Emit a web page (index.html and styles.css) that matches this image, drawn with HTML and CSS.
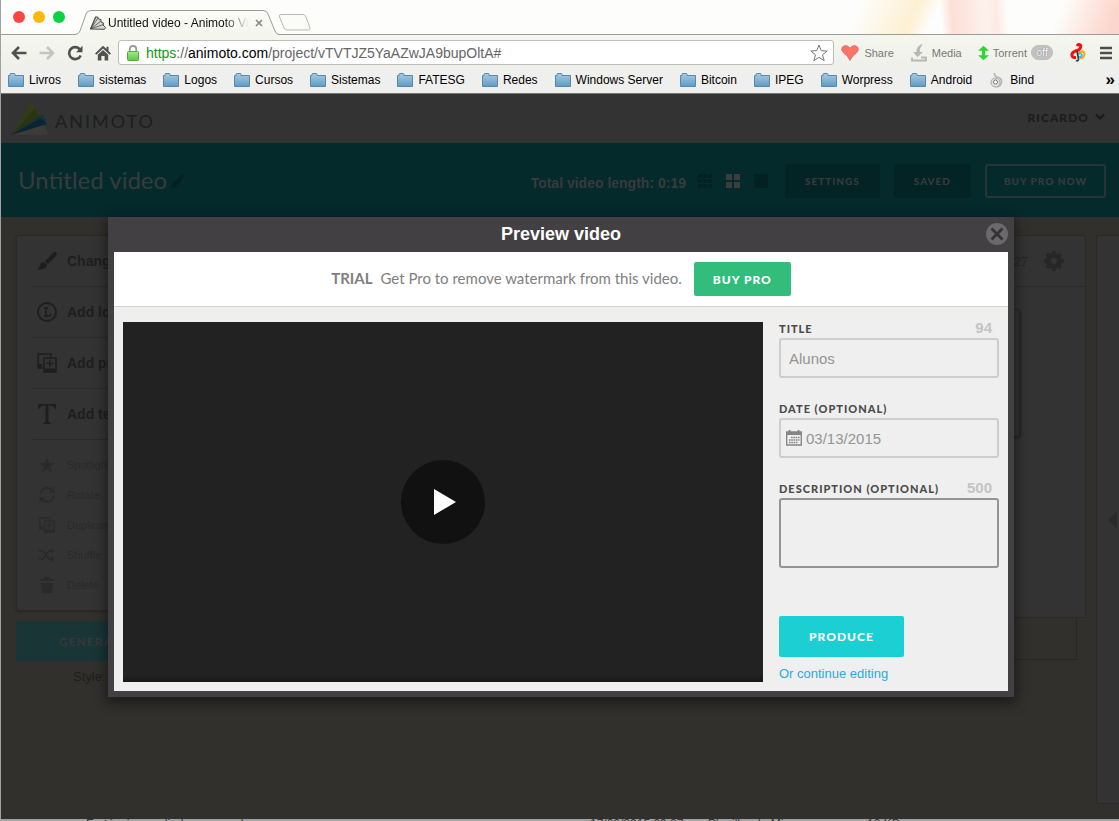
FILE: index.html
```html
<!DOCTYPE html>
<html lang="en">
<head>
<meta charset="utf-8">
<title>Untitled video - Animoto Video Maker</title>
<link rel="stylesheet" href="styles.css">
</head>
<body>
<svg class="defs" aria-hidden="true">
  <defs>
    <linearGradient id="folderFill" x1="0" y1="0" x2="0" y2="1"><stop offset="0" stop-color="#a9cbe2"/><stop offset="1" stop-color="#5f9bc4"/></linearGradient>
    <linearGradient id="lockFill" x1="0" y1="0" x2="0" y2="1"><stop offset="0" stop-color="#a5e88a"/><stop offset="1" stop-color="#5fc64c"/></linearGradient>
    <linearGradient id="tabFill" x1="0" y1="0" x2="0" y2="1"><stop offset="0" stop-color="#fdfdf8"/><stop offset="1" stop-color="#f4f5ec"/></linearGradient>
    <symbol id="folder" viewBox="0 0 16 14"><path d="M.5 13.500V2.500H2V1.500Q2 .5 3 .5H6Q7 .5 7 1.500V2.500H15.500V13.500Z" fill="url(#folderFill)" stroke="#5b88a6"/></symbol>
    <symbol id="duplicate" viewBox="0 0 20 20"><path d="M6 15H1V1H14V4" fill="none" stroke="currentColor" stroke-width="1.500"/><path d="M1 11H5V15H1Z" fill="currentColor"/><rect x="7" y="5" width="12" height="14" fill="none" stroke="currentColor" stroke-width="1.500"/><path d="M7 15.500H19V19H7Z" fill="currentColor"/><path d="M13 7V14M9.500 10.500H16.500" stroke="currentColor" stroke-width="1.500"/></symbol>
  </defs>
</svg>
<div class="browser">
  <header class="tabstrip">
    <div class="lights"><i class="light red"></i><i class="light amber"></i><i class="light green"></i></div>
    <div class="tab">
      <svg class="tab-shape" viewBox="0 0 204 25" preserveAspectRatio="none"><path d="M0 24.500Q4 24 5 21L11 4Q12 .5 16 .5H188Q192 .5 193 4L200 21Q201 24 204 24.500V25H0Z" fill="url(#tabFill)"/><path d="M0 24.500Q4 24 5 21L11 4Q12 .5 16 .5H188Q192 .5 193 4L200 21Q201 24 204 24.500" fill="none" stroke="#9b9b98"/></svg>
      <svg class="favicon" viewBox="0 0 16 14"><path d="M.5 13L5.500 .8L8 1.200L8.500 3L11 3.500V6L13.500 7L13 9L15.500 11.500L14.500 13.300Z" fill="#d6d6d3" stroke="#4a4a4a"/><path d="M.5 13L8 2M.5 13L11 5M.5 13L13.500 8.500M.5 13L6 1" stroke="#4a4a4a" fill="none" stroke-width=".8"/></svg>
      <span class="tab-title">Untitled video - Animoto Vi</span>
      <button class="tab-close" aria-label="Close tab"><svg viewBox="0 0 8 8"><path d="M1 1L7 7M7 1L1 7" stroke="#888" stroke-width="1.700"/></svg></button>
    </div>
    <button class="new-tab" aria-label="New tab"><svg viewBox="0 0 34 17"><path d="M3 .5H25Q27 .5 28 3L32 14Q32.500 16 30.500 16H9Q7 16 6 14L1.500 3Q.8 .5 3 .5Z" fill="#fbfbf7" stroke="#b9b9b6"/></svg></button>
  </header>

  <nav class="toolbar">
    <div class="nav-buttons">
      <button aria-label="Back"><svg viewBox="0 0 16 16"><path d="M15.500 8H2.500M8 2L2 8L8 14" fill="none" stroke="#505050" stroke-width="2.600"/></svg></button>
      <button aria-label="Forward"><svg viewBox="0 0 16 16"><path d="M.5 8H13.500M8 2L14 8L8 14" fill="none" stroke="#c4c4c0" stroke-width="2.600"/></svg></button>
      <button aria-label="Reload"><svg viewBox="0 0 16 16"><path d="M13 4.500A6 6 0 1 0 13.700 10.500" fill="none" stroke="#505050" stroke-width="2.600"/><path d="M9 7.300H15.500V.8Z" fill="#505050"/></svg></button>
      <button aria-label="Home"><svg viewBox="0 0 16 16"><path d="M8 .8L0 8.500L1.400 9.800L8 3.600L14.600 9.800L16 8.500L13.500 6V1.800H11.500V4Z" fill="#505050"/><path d="M2.800 9.800L8 5L13.200 9.800V15.500H9.600V11H6.400V15.500H2.800Z" fill="#505050"/></svg></button>
    </div>
    <div class="address">
      <svg class="lock" viewBox="0 0 12 16"><path d="M2.700 8V4.500Q2.700 1 6 1T9.300 4.500V8" fill="none" stroke="#9b9b9b" stroke-width="1.800"/><rect x=".5" y="6.500" width="11" height="9" rx="1" fill="url(#lockFill)" stroke="#4caf3c"/></svg>
      <span class="url"><span class="scheme">https</span>://<span class="host">animoto.com</span>/project/vTVTJZ5YaAZwJA9bupOltA#</span>
      <svg class="star" viewBox="0 0 18 18"><path d="M9 1L11.200 6.700L17.200 7L12.500 10.800L14.200 16.700L9 13.300L3.800 16.700L5.500 10.800L.8 7L6.800 6.700Z" fill="#fff" stroke="#777" stroke-linejoin="round"/></svg>
    </div>
    <div class="extensions">
      <span class="ext share"><svg viewBox="0 0 18 16"><path d="M9 15.500Q7 11 2.500 8Q-.8 4.500 1.500 1.800Q5.500-1.200 9 3Q12.500-1.200 16.500 1.800Q18.800 4.500 15.500 8Q11 11 9 15.500Z" fill="#fb7466" stroke="#cf6a5e" stroke-width=".6"/></svg>Share</span>
      <span class="ext media"><svg viewBox="0 0 16 18"><path d="M10.500 0Q5 3 5.500 8H2L6.500 13L12 8H9Q8 4 11.500 1Z" fill="#b6b6b4"/><path d="M1 13.500V16.500H15V13.500H10" fill="none" stroke="#b6b6b4" stroke-width="1.800"/></svg>Media</span>
      <span class="ext torrent"><svg viewBox="0 0 12 16"><path d="M6 0L12 5.500H7.700V10.500H12L6 16L0 10.500H4.300V5.500H0Z" fill="#2ed832"/></svg>Torrent<span class="off">off</span></span>
      <svg class="clef" viewBox="0 0 16 20"><path d="M8.500 9.500Q14 7 14.500 11Q14 15.500 10 15" fill="none" stroke="#f3ac16" stroke-width="2.200"/><path d="M8 11Q11 9.500 12 12Q11.500 14 9 14" fill="none" stroke="#35b8e8" stroke-width="1.600"/><path d="M7 3Q8.500 .5 10.500 2.200Q11.500 5 8.500 7Q2.500 8.500 1.800 11.500Q2 15 6 14.500" fill="none" stroke="#f5120e" stroke-width="3"/><path d="M7 8L8.500 16Q8.500 18.500 6 17.500" fill="none" stroke="#3b3b3b" stroke-width="1.700"/></svg>
      <button class="menu" aria-label="Menu"><svg viewBox="0 0 14 14"><path d="M1 2H13M1 7H13M1 12H13" stroke="#4d4d4d" stroke-width="2.600"/></svg></button>
    </div>
  </nav>

  <nav class="bookmarks">
    <a href="#"><svg viewBox="0 0 16 14"><use href="#folder"/></svg>Livros</a>
    <a href="#"><svg viewBox="0 0 16 14"><use href="#folder"/></svg>sistemas</a>
    <a href="#"><svg viewBox="0 0 16 14"><use href="#folder"/></svg>Logos</a>
    <a href="#"><svg viewBox="0 0 16 14"><use href="#folder"/></svg>Cursos</a>
    <a href="#"><svg viewBox="0 0 16 14"><use href="#folder"/></svg>Sistemas</a>
    <a href="#"><svg viewBox="0 0 16 14"><use href="#folder"/></svg>FATESG</a>
    <a href="#"><svg viewBox="0 0 16 14"><use href="#folder"/></svg>Redes</a>
    <a href="#"><svg viewBox="0 0 16 14"><use href="#folder"/></svg>Windows Server</a>
    <a href="#"><svg viewBox="0 0 16 14"><use href="#folder"/></svg>Bitcoin</a>
    <a href="#"><svg viewBox="0 0 16 14"><use href="#folder"/></svg>IPEG</a>
    <a href="#"><svg viewBox="0 0 16 14"><use href="#folder"/></svg>Worpress</a>
    <a href="#"><svg viewBox="0 0 16 14"><use href="#folder"/></svg>Android</a>
    <a href="#"><svg class="bind" viewBox="0 0 14 16"><path d="M4.500 1Q4 4 7 5Q12 6 11.500 10Q11 14.500 7 15" fill="none" stroke="#b5b5b5" stroke-width="1.600"/><circle cx="5.500" cy="10.500" r="4.500" fill="#e2e2e2" stroke="#a5a5a5"/><circle cx="5.500" cy="10" r="2" fill="#fff" stroke="#777"/></svg>Bind</a>
    <button class="more" aria-label="More bookmarks">»</button>
  </nav>

  <main class="page">
    <header class="site-header">
      <a class="brand" href="#"><svg viewBox="0 0 38 34"><path d="M20 0L37 30Q38 33 35 33H0Z" fill="#3b3b3a"/><path d="M19 0L0 33L30 17L20 1Z" fill="#343a19"/><path d="M0 33L24 7L30 17Z" fill="#293411"/><path d="M0 33L32 12L36 20Z" fill="#123440"/><path d="M0 33L30 16L36 22Z" fill="#0b2530"/></svg><span>ANIMOTO</span></a>
      <button class="account">RICARDO <svg viewBox="0 0 10 8"><path d="M1 1.500L5 5.500L9 1.500" fill="none" stroke="#1c1c1c" stroke-width="2.400"/></svg></button>
    </header>
    <section class="project-bar">
      <h1>Untitled video</h1>
      <svg class="pencil" viewBox="0 0 14 14"><path d="M0 14L1 10L9 2L12 5L4 13ZM10 1L11 0L14 3L13 4Z" fill="#042022"/></svg>
      <span class="length">Total video length: 0:19</span>
      <div class="views">
        <svg viewBox="0 0 14 14"><path d="M0 0H4V4H0ZM5 0H9V4H5ZM10 0H14V4H10ZM0 5H4V9H0ZM5 5H9V9H5ZM10 5H14V9H10ZM0 10H4V14H0ZM5 10H9V14H5ZM10 10H14V14H10Z" fill="#032022"/></svg>
        <svg viewBox="0 0 14 14"><path d="M0 0H6V6H0ZM8 0H14V6H8ZM0 8H6V14H0ZM8 8H14V14H8Z" fill="#3c3c3c"/></svg>
        <svg viewBox="0 0 14 14"><path d="M0 0H14V14H0Z" fill="#032022"/></svg>
      </div>
      <div class="actions">
        <button>SETTINGS</button>
        <button>SAVED</button>
        <button class="outline">BUY PRO NOW</button>
      </div>
    </section>
    <section class="workspace">
      <aside class="side">
        <div class="tools">
          <ul class="main-tools">
            <li><svg viewBox="0 0 20 20"><path d="M19 1Q21 3 18 6L11 13L8 10L14 4Q17 0 19 1ZM7.500 11L10 13.500Q10 19 0 18.500Q2 17 3 14Q4 11 7.500 11Z" fill="currentColor"/></svg>Change style</li>
            <li><svg viewBox="0 0 20 20"><circle cx="10" cy="10" r="9" fill="none" stroke="currentColor" stroke-width="1.800"/><path d="M7 6H11M9 6V14M7 14H13.500V11.500" fill="none" stroke="currentColor" stroke-width="1.500"/></svg>Add logo</li>
            <li><svg viewBox="0 0 20 20"><use href="#duplicate"/></svg>Add pics &amp; vids</li>
            <li><svg viewBox="0 0 20 20"><path d="M1 0H19V5H18Q17 1.500 13 1.500H11.500V17Q11.500 19 14 19V20H6V19Q8.500 19 8.500 17V1.500H7Q3 1.500 2 5H1Z" fill="currentColor"/></svg>Add text</li>
          </ul>
          <ul class="edit-tools">
            <li><svg viewBox="0 0 16 16"><path d="M8 0L10 6H16L11 9.700L13 16L8 12L3 16L5 9.700L0 6H6Z" fill="currentColor"/></svg>Spotlight</li>
            <li><svg viewBox="0 0 16 16"><path d="M1.500 7A6.500 6.500 0 0 1 13 3.500M14.500 9A6.500 6.500 0 0 1 3 12.500" fill="none" stroke="currentColor" stroke-width="2"/><path d="M15.500 0V6H10ZM.5 16V10H6Z" fill="currentColor"/></svg>Rotate</li>
            <li><svg viewBox="0 0 20 20"><use href="#duplicate"/></svg>Duplicate</li>
            <li><svg viewBox="0 0 16 16"><path d="M0 4H4L10 12H13M0 12H4L10 4H13" fill="none" stroke="currentColor" stroke-width="1.700"/><path d="M12 1L16 4L12 7ZM12 9L16 12L12 15Z" fill="currentColor"/></svg>Shuffle</li>
            <li><svg viewBox="0 0 16 16"><path d="M1 2H5V0H11V2H15V4H1ZM2 6H14L13 16H3Z" fill="currentColor"/></svg>Delete</li>
          </ul>
        </div>
        <button class="generate">GENERATE PREVIEW</button>
        <p>Style: Rustic</p>
      </aside>
      <div class="board">
        <div class="timeline">
          <div class="timeline-head"><span>27</span><svg viewBox="0 0 20 20"><circle cx="10" cy="10" r="5.500" fill="none" stroke="currentColor" stroke-width="5"/><path d="M10 0V4M10 16V20M0 10H4M16 10H20M3 3L5.500 5.500M14.500 14.500L17 17M17 3L14.500 5.500M5.500 14.500L3 17" stroke="currentColor" stroke-width="3.500"/></svg></div>
          <div class="clip"></div>
        </div>
        <div class="song"></div>
      </div>
      <aside class="drawer"><svg viewBox="0 0 9 18"><path d="M9 0V18L0 9Z" fill="#2b2b2b"/></svg></aside>
    </section>

    <div class="overlay">
      <section class="modal" role="dialog" aria-labelledby="modal-title">
        <header class="modal-head">
          <h2 id="modal-title">Preview video</h2>
          <button class="close" aria-label="Close"><svg viewBox="0 0 22 22"><circle cx="11" cy="11" r="11" fill="#6b696c"/><path d="M5.500 5.500L16.500 16.500M16.500 5.500L5.500 16.500" stroke="#343235" stroke-width="2.800"/></svg></button>
        </header>
        <div class="banner"><strong>TRIAL</strong><span>Get Pro to remove watermark from this video.</span><button>BUY PRO</button></div>
        <div class="modal-body">
          <div class="video"><button aria-label="Play"><svg viewBox="0 0 22 26"><path d="M0 0L22 13L0 26Z" fill="#fff"/></svg></button></div>
          <form class="details">
            <div class="field"><div class="label-row"><label for="title">TITLE</label><span>94</span></div><input id="title" type="text" value="Alunos"></div>
            <div class="field date"><div class="label-row"><label for="date">DATE (OPTIONAL)</label></div>
              <div class="date-box"><svg viewBox="0 0 16 16"><path d="M.7 2H15.300V15H.7Z" fill="none" stroke="#858585" stroke-width="1.400"/><path d="M0 2H16V5H0Z" fill="#858585"/><path d="M3.500 0V3M12.500 0V3" stroke="#858585" stroke-width="2"/><path d="M5 7.500H13.500M3 10H13.500M3 12.500H11.500" stroke="#858585" stroke-width="1.700" stroke-dasharray="1.600 .7"/></svg><input id="date" type="text" value="03/13/2015"></div></div>
            <div class="field"><div class="label-row"><label for="desc">DESCRIPTION (OPTIONAL)</label><span>500</span></div><textarea id="desc"></textarea></div>
            <button type="button" class="produce">PRODUCE</button>
            <a href="#">Or continue editing</a>
          </form>
        </div>
      </section>
    </div>
  </main>
</div>
<footer class="behind"><span>Eq técnica avaliador an nor xkx</span><span>17/02/2015 09:27</span><span>Planilha do Micro</span><span>10 KB</span></footer>
</body>
</html>
```
FILE: styles.css
```css
* { box-sizing: border-box; }
body {
  margin: 0;
  height: 100vh;
  overflow: hidden;
  display: flex;
  flex-direction: column;
  font-family: "Liberation Sans", Arial, sans-serif;
  background: #a3a3a3;
}
button { border: 0; padding: 0; background: none; font: inherit; color: inherit; }
svg { display: block; flex: none; }
a { text-decoration: none; color: inherit; }
ul { list-style: none; margin: 0; padding: 0; }
.defs { position: absolute; width: 0; height: 0; }
.browser {
  flex: 1;
  min-height: 0;
  display: flex;
  flex-direction: column;
  border-left: 1px solid #a0a0a2;
}

/* Tab strip */
.tabstrip {
  position: relative;
  display: flex;
  align-items: flex-end;
  height: 35px;
  padding-left: 12px;
  border-bottom: 1px solid #9b9b98;
  background:
    linear-gradient(86deg, transparent 84%, #fce0d6 85%, #fdf1ec 88%, #fdeae4 89%, transparent 90%),
    linear-gradient(110deg, transparent 94%, #fcd6cc 99%),
    linear-gradient(115deg, transparent 76%, #fdf0d2 81%, transparent 83%),
    #fdfdfb;
}
.lights { display: flex; gap: 8px; width: 62px; align-self: center; }
.light { width: 12px; height: 12px; border-radius: 50%; }
.red { background: #fc4645; }
.amber { background: #fdb90b; }
.green { background: #0ad343; }
.tab {
  position: relative;
  display: flex;
  align-items: center;
  width: 204px;
  height: 25px;
  margin-bottom: -1px;
  padding: 0 16px 0 15px;
}
.tab-shape { position: absolute; inset: 0; width: 100%; height: 100%; }
.favicon { position: relative; width: 16px; height: 14px; }
.tab-title {
  position: relative;
  flex: 1;
  margin-left: 2px;
  overflow: hidden;
  white-space: nowrap;
  font-size: 12px;
  color: #111;
  -webkit-mask-image: linear-gradient(90deg, #000 82%, transparent);
  mask-image: linear-gradient(90deg, #000 82%, transparent);
}
.tab-close { position: relative; margin-left: 6px; }
.tab-close svg { width: 8px; height: 8px; }
.new-tab { margin: 0 0 3px -1px; }
.new-tab svg { width: 34px; height: 17px; }

/* Toolbar */
.toolbar {
  display: flex;
  align-items: center;
  height: 35px;
  padding: 0 6px 0 10px;
  background: linear-gradient(#f5f6ed, #efefeb);
}
.nav-buttons { display: flex; gap: 12px; }
.nav-buttons svg { width: 16px; height: 16px; }
.address {
  flex: 1;
  display: flex;
  align-items: center;
  height: 25px;
  margin: 0 7px;
  padding: 0 5px 0 8px;
  border: 1px solid #bdbdba;
  border-radius: 3px;
  background: #fff;
}
.lock { width: 12px; height: 16px; }
.url { flex: 1; margin-left: 7px; font-size: 14px; color: #666; white-space: nowrap; }
.scheme { color: #0c9a16; }
.host { color: #000; }
.star { width: 18px; height: 18px; }
.extensions { display: flex; align-items: center; font-size: 11px; color: #777; }
.ext { display: flex; align-items: center; gap: 5px; margin-right: 17px; }
.share svg { width: 18px; height: 16px; }
.media svg { width: 16px; height: 18px; }
.media { margin-right: 16px; }
.torrent { gap: 4px; }
.torrent svg { width: 11px; height: 16px; }
.off {
  padding: 0 4px;
  border: 1px solid #bbb;
  border-radius: 8px;
  background: #c2c2c2;
  color: #fff;
  line-height: 13px;
  text-shadow: 0 0 1px #555;
}
.clef { width: 16px; height: 20px; margin-right: 13px; }
.menu svg { width: 14px; height: 14px; }

/* Bookmarks */
.bookmarks {
  display: flex;
  align-items: center;
  gap: 17px;
  height: 24px;
  padding: 0 4px 4px 7px;
  border-bottom: 1px solid #777;
  background: #efefed;
  font-size: 12px;
  color: #000;
}
.bookmarks a { display: flex; align-items: center; gap: 5px; white-space: nowrap; }
.bookmarks svg { width: 16px; height: 14px; }
.bookmarks .bind { height: 16px; }
.more { margin-left: auto; font-size: 17px; font-weight: bold; line-height: 16px; }

/* Dimmed project page */
.page {
  position: relative;
  flex: 1;
  min-height: 0;
  display: flex;
  flex-direction: column;
  background: #32302c;
  color: #1e1e1e;
}
.site-header {
  display: flex;
  align-items: center;
  justify-content: space-between;
  height: 49px;
  padding: 0 14px 0 10px;
  background: #333;
}
.brand { display: flex; align-items: center; gap: 6px; font: 18px Lato, sans-serif; letter-spacing: 2px; }
.brand svg { width: 38px; height: 34px; }
.brand span { padding-top: 5px; }
.account { display: flex; align-items: center; gap: 6px; padding-bottom: 3px; font: 900 12px Lato, sans-serif; letter-spacing: 1px; color: #1c1c1c; }
.account svg { width: 10px; height: 8px; }
.project-bar {
  display: flex;
  align-items: center;
  height: 74px;
  padding: 2px 13px 0 17px;
  background: #052a2c;
  color: #383b3c;
}
.project-bar h1 { margin: 0; padding-bottom: 4px; font: 24px Lato, sans-serif; }
.pencil { width: 14px; height: 14px; margin-left: 4px; }
.length { margin-left: auto; padding-top: 4px; font-size: 14px; font-weight: bold; white-space: nowrap; }
.views { display: flex; gap: 14px; margin: 0 17px 0 12px; }
.views svg { width: 14px; height: 14px; }
.actions { display: flex; gap: 14px; }
.actions button {
  height: 34px;
  padding: 0 20px;
  border-radius: 3px;
  background: #042325;
  font: 900 10px Lato, sans-serif;
  letter-spacing: 1px;
}
.actions .outline { border: 2px solid #283536; background: none; padding: 0 17px; }
.workspace {
  flex: 1;
  min-height: 0;
  display: grid;
  grid-template-columns: 260px 1fr 23px;
  gap: 10px;
  padding: 18px 0 15px 15px;
}
.tools { height: 376px; padding: 0 16px; border: 1px solid #2a2925; border-radius: 3px; background: #333; box-shadow: 0 1px 2px #272622; }
.tools li { display: flex; align-items: center; white-space: nowrap; }
.main-tools li { gap: 10px; height: 51px; padding-left: 4px; border-bottom: 1px solid #2b2b2b; font-size: 14px; font-weight: bold; }
.main-tools svg { width: 20px; height: 20px; }
.edit-tools { padding-top: 10px; color: #2a2a2a; }
.edit-tools li { gap: 12px; height: 30px; padding-left: 6px; font-size: 11px; }
.edit-tools svg { width: 16px; height: 16px; }
.generate {
  width: 100%;
  height: 40px;
  margin-top: 10px;
  padding-left: 43px;
  border-radius: 2px;
  background: #193536;
  color: #353838;
  font: 900 12px Lato, sans-serif;
  letter-spacing: 1px;
  text-align: left;
}
.side p { margin: 8px 0 0 57px; font-size: 13px; line-height: 16px; }
.timeline { height: 383px; border: 1px solid #2a2925; border-radius: 3px; background: #333; }
.timeline-head {
  display: flex;
  justify-content: flex-end;
  align-items: center;
  gap: 16px;
  height: 51px;
  padding-right: 21px;
  border-bottom: 1px solid #2b2b2b;
  color: #272727;
  font-size: 13px;
}
.timeline-head svg { width: 20px; height: 20px; }
.clip { height: 128px; margin: 22px 65px 0 20px; border: 1px solid #272727; border-radius: 3px; box-shadow: 1px 1px 2px #252525; }
.song { height: 42px; margin-right: 9px; border: 1px solid #2a2824; border-top: 0; }
.drawer { display: flex; align-items: center; justify-content: flex-end; padding-right: 2px; border: 1px solid #2a2926; border-right: 0; border-radius: 3px 0 0 3px; background: #333; }
.drawer svg { width: 9px; height: 18px; }

/* Preview dialog */
.overlay { position: absolute; inset: 123px 0 0; display: flex; justify-content: center; align-items: flex-start; padding-left: 2px; }
.modal {
  width: calc(100% - 40px);
  max-width: 906px;
  border: 6px solid #434044;
  border-top: 0;
  background: #efefef;
  box-shadow: 0 4px 12px 2px rgba(0, 0, 0, .45);
}
.modal-head { position: relative; height: 35px; background: #434044; color: #fff; text-align: center; }
.modal-head h2 { margin: 0; font-size: 18px; line-height: 35px; }
.close { position: absolute; top: 6px; right: 0; }
.close svg { width: 22px; height: 22px; }
.banner {
  display: flex;
  align-items: center;
  justify-content: center;
  height: 55px;
  border-bottom: 1px solid #d4d4ca;
  background: #fff;
  font: 15px/18px Lato, sans-serif;
  color: #808080;
}
.banner strong, .banner span { padding-bottom: 2px; }
.banner span { margin: 0 12px 0 8px; }
.banner button {
  height: 34px;
  padding: 0 19px;
  border-radius: 2px;
  background: #33bd7c;
  color: #fff;
  font: 900 12px Lato, sans-serif;
  letter-spacing: 1px;
}
.modal-body { display: flex; gap: 16px; padding: 15px 9px 9px; }
.video { flex: 1; aspect-ratio: 16 / 9; display: flex; align-items: center; justify-content: center; background: linear-gradient(#222 98%, #181818); }
.video button { display: flex; align-items: center; justify-content: center; width: 84px; height: 84px; padding-left: 4px; border-radius: 50%; background: #111; }
.video svg { width: 22px; height: 26px; }
.details { width: 220px; display: flex; flex-direction: column; align-items: flex-start; }
.field { width: 100%; height: 80px; }
.field:nth-child(3) { height: 102px; }
.label-row { display: flex; justify-content: space-between; height: 16px; padding-right: 7px; }
.label-row label { font: 900 11px/13px Lato, sans-serif; letter-spacing: 1px; color: #4b4b4b; }
.label-row span { font-size: 15px; font-weight: bold; line-height: 12px; color: #c4c4c4; }
.field input { width: 100%; height: 40px; padding: 0 8px; border: 2px solid #cdcdcd; border-radius: 3px; background: none; font: 15px "Liberation Sans", Arial, sans-serif; color: #949494; }
.date-box { display: flex; align-items: center; height: 40px; padding-left: 5px; border: 2px solid #cdcdcd; border-radius: 3px; }
.date-box svg { width: 16px; height: 16px; }
.date-box input { min-width: 0; border: 0; padding: 0 4px; }
.field textarea { display: block; width: 100%; height: 70px; border: 2px solid #949494; border-radius: 3px; background: none; resize: none; }
.produce {
  height: 41px;
  margin-top: 32px;
  padding: 0 30px;
  border-radius: 2px;
  background: #1ccfd2;
  color: #fff;
  font: 900 12px Lato, sans-serif;
  letter-spacing: 1px;
}
.details a { margin-top: 9px; font-size: 13px; line-height: 16px; color: #29abe2; }

/* Sliver of the window underneath */
.behind {
  display: grid;
  grid-template-columns: 504px 118px 159px 1fr;
  height: 2px;
  padding-left: 86px;
  overflow: hidden;
  background: #a3a3a3;
  font-size: 12px;
  line-height: 10px;
  color: #333;
  white-space: nowrap;
}
```
